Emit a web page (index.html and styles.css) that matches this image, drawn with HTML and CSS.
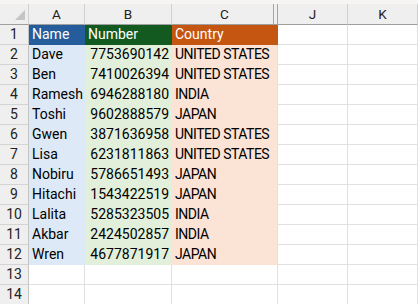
FILE: index.html
```html
<!DOCTYPE html>
<html>
<head>
<meta charset="utf-8">
<link rel="stylesheet" href="styles.css">
</head>
<body>
<div class="top-strip"></div>
<div class="sheet">
  <div class="cell corner"><span class="tri"></span></div>
  <div class="cell colhead">A</div>
  <div class="cell colhead">B</div>
  <div class="cell colhead hidden-after">C</div>
  <div class="cell colhead">J</div>
  <div class="cell colhead">K</div>

  <div class="cell rowhead">1</div>
  <div class="cell hdr-blue">Name</div>
  <div class="cell hdr-green">Number</div>
  <div class="cell hdr-orange">Country</div>
  <div class="cell"></div>
  <div class="cell"></div>

  <div class="cell rowhead">2</div>
  <div class="cell fill-a">Dave</div>
  <div class="cell fill-b num">7753690142</div>
  <div class="cell fill-c">UNITED STATES</div>
  <div class="cell"></div>
  <div class="cell"></div>

  <div class="cell rowhead">3</div>
  <div class="cell fill-a">Ben</div>
  <div class="cell fill-b num">7410026394</div>
  <div class="cell fill-c">UNITED STATES</div>
  <div class="cell"></div>
  <div class="cell"></div>

  <div class="cell rowhead">4</div>
  <div class="cell fill-a">Ramesh</div>
  <div class="cell fill-b num">6946288180</div>
  <div class="cell fill-c">INDIA</div>
  <div class="cell"></div>
  <div class="cell"></div>

  <div class="cell rowhead">5</div>
  <div class="cell fill-a">Toshi</div>
  <div class="cell fill-b num">9602888579</div>
  <div class="cell fill-c">JAPAN</div>
  <div class="cell"></div>
  <div class="cell"></div>

  <div class="cell rowhead">6</div>
  <div class="cell fill-a">Gwen</div>
  <div class="cell fill-b num">3871636958</div>
  <div class="cell fill-c">UNITED STATES</div>
  <div class="cell"></div>
  <div class="cell"></div>

  <div class="cell rowhead">7</div>
  <div class="cell fill-a">Lisa</div>
  <div class="cell fill-b num">6231811863</div>
  <div class="cell fill-c">UNITED STATES</div>
  <div class="cell"></div>
  <div class="cell"></div>

  <div class="cell rowhead">8</div>
  <div class="cell fill-a">Nobiru</div>
  <div class="cell fill-b num">5786651493</div>
  <div class="cell fill-c">JAPAN</div>
  <div class="cell"></div>
  <div class="cell"></div>

  <div class="cell rowhead">9</div>
  <div class="cell fill-a">Hitachi</div>
  <div class="cell fill-b num">1543422519</div>
  <div class="cell fill-c">JAPAN</div>
  <div class="cell"></div>
  <div class="cell"></div>

  <div class="cell rowhead">10</div>
  <div class="cell fill-a">Lalita</div>
  <div class="cell fill-b num">5285323505</div>
  <div class="cell fill-c">INDIA</div>
  <div class="cell"></div>
  <div class="cell"></div>

  <div class="cell rowhead">11</div>
  <div class="cell fill-a">Akbar</div>
  <div class="cell fill-b num">2424502857</div>
  <div class="cell fill-c">INDIA</div>
  <div class="cell"></div>
  <div class="cell"></div>

  <div class="cell rowhead">12</div>
  <div class="cell fill-a">Wren</div>
  <div class="cell fill-b num">4677871917</div>
  <div class="cell fill-c">JAPAN</div>
  <div class="cell"></div>
  <div class="cell"></div>

  <div class="cell rowhead">13</div>
  <div class="cell"></div>
  <div class="cell"></div>
  <div class="cell"></div>
  <div class="cell"></div>
  <div class="cell"></div>

  <div class="cell rowhead">14</div>
  <div class="cell"></div>
  <div class="cell"></div>
  <div class="cell"></div>
  <div class="cell"></div>
  <div class="cell"></div>
</div>
</body>
</html>
```

FILE: styles.css
```css
html, body {
  margin: 0;
  padding: 0;
  background: #ffffff;
  overflow: hidden;
}
body {
  width: 418px;
  height: 304px;
  font-family: Roboto, "Liberation Sans", Arial, sans-serif;
  font-size: 14px;
  color: #000;
}
.top-strip {
  height: 4px;
  background: #f7f5f3;
}
.sheet {
  display: grid;
  grid-template-columns: 29px 56px 87px 106px 70px 1fr;
  grid-template-rows: 21px repeat(14, 20px);
}
.cell {
  box-sizing: border-box;
  border-right: 1px solid #e1e1e1;
  border-bottom: 1px solid #e1e1e1;
  line-height: 19px;
  padding: 0 3px;
  white-space: nowrap;
  overflow: hidden;
}
.corner {
  position: relative;
  background: #efefef;
  border-right: 1px solid #d0d0d0;
  border-bottom: 1px solid #9f9f9f;
}
.tri {
  position: absolute;
  left: 15px;
  top: 6px;
  width: 10px;
  height: 10px;
  background: #c4c4c4;
  clip-path: polygon(100% 0, 100% 100%, 0 100%);
}
.colhead {
  background: #efefef;
  border-right: 1px solid #d0d0d0;
  border-bottom: 1px solid #9f9f9f;
  text-align: center;
  color: #222;
  line-height: 20px;
  font-size: 13.5px;
}
.hidden-after {
  border-right-color: #a6a6a6;
  box-shadow: inset -3px 0 0 #efefef, inset -4px 0 0 #a6a6a6;
}
.rowhead {
  background: #efefef;
  border-right: 1px solid #c4c4c4;
  border-bottom: 1px solid #d4d4d4;
  text-align: center;
  color: #222;
  padding: 0;
}
.hdr-blue {
  background: #245c9c;
  border-color: #245c9c;
  color: #fff;
}
.hdr-green {
  background: #125a1f;
  border-color: #125a1f;
  color: #fff;
}
.hdr-orange {
  background: #c45612;
  border-color: #c45612;
  color: #fff;
}
.fill-a {
  background: #dde9f6;
  border-color: #dde9f6;
}
.fill-b {
  background: #e2efda;
  border-color: #e2efda;
}
.fill-c {
  background: #fbe3d6;
  border-color: #fbe3d6;
  border-right-color: #e1e1e1;
  letter-spacing: -0.5px;
}
.num {
  text-align: right;
  padding-right: 2px;
}
```
